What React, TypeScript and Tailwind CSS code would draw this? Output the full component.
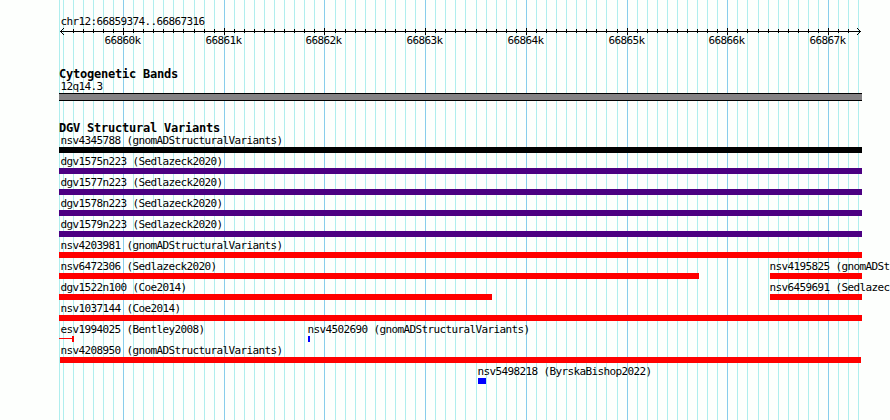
import { clsx } from "clsx";

interface Feature {
  name: string;
  from: number;
  to: number;
  color: string;
  thin?: boolean;
}

const VIEW_START = 66859374;
const VIEW_END = 66867316;
const PAD_LEFT = 60;
const SCALE = 800 / (VIEW_END - VIEW_START + 1);

const toX = (position: number): number =>
  Math.round(PAD_LEFT + (position - VIEW_START) * SCALE);

const ticks = Array.from({ length: 80 }, (_, index) => {
  const position = 66859400 + index * 100;
  return { position, x: toX(position), isMajor: position % 1000 === 0 };
});

const rows: Feature[][] = [
  [{ name: "nsv4345788 (gnomADStructuralVariants)", from: 59, to: 862, color: "bg-black" }],
  [{ name: "dgv1575n223 (Sedlazeck2020)", from: 59, to: 862, color: "bg-[#4b0082]" }],
  [{ name: "dgv1577n223 (Sedlazeck2020)", from: 59, to: 862, color: "bg-[#4b0082]" }],
  [{ name: "dgv1578n223 (Sedlazeck2020)", from: 59, to: 862, color: "bg-[#4b0082]" }],
  [{ name: "dgv1579n223 (Sedlazeck2020)", from: 59, to: 862, color: "bg-[#4b0082]" }],
  [{ name: "nsv4203981 (gnomADStructuralVariants)", from: 59, to: 862, color: "bg-[#ff0000]" }],
  [
    { name: "nsv6472306 (Sedlazeck2020)", from: 59, to: 699, color: "bg-[#ff0000]" },
    { name: "nsv4195825 (gnomADStructuralVariants)", from: 770, to: 862, color: "bg-[#ff0000]" },
  ],
  [
    { name: "dgv1522n100 (Coe2014)", from: 59, to: 492, color: "bg-[#ff0000]" },
    { name: "nsv6459691 (Sedlazeck2020)", from: 770, to: 862, color: "bg-[#ff0000]" },
  ],
  [{ name: "nsv1037144 (Coe2014)", from: 59, to: 862, color: "bg-[#ff0000]" }],
  [
    { name: "esv1994025 (Bentley2008)", from: 59, to: 74, color: "bg-[#ff0000]", thin: true },
    { name: "nsv4502690 (gnomADStructuralVariants)", from: 308, to: 310, color: "bg-[#0000ff]" },
  ],
  [{ name: "nsv4208950 (gnomADStructuralVariants)", from: 60, to: 861, color: "bg-[#ff0000]" }],
  [{ name: "nsv5498218 (ByrskaBishop2022)", from: 478, to: 486, color: "bg-[#0000ff]" }],
];

const GridLines = () => (
  <svg
    className="absolute inset-0"
    width="890"
    height="420"
    shapeRendering="crispEdges"
  >
    <rect x="59" y="0" width="1" height="420" fill="#afeeee" />
    {ticks.map(({ position, x, isMajor }) => (
      <rect
        key={position}
        x={x}
        y="0"
        width="1"
        height="420"
        fill={isMajor ? "#87ceeb" : "#afeeee"}
      />
    ))}
  </svg>
);

const Ruler = () => (
  <div className="relative -mt-px h-[39px]">
    <svg
      className="block"
      width="890"
      height="8"
      viewBox="0 27 890 8"
      shapeRendering="crispEdges"
    >
      <rect x="60" y="31" width="801" height="1" />
      {ticks.slice(1, -1).map(({ position, x, isMajor }) => (
        <rect
          key={position}
          x={x}
          y={isMajor ? 28 : 29}
          width="1"
          height={isMajor ? 7 : 4}
        />
      ))}
      <path d="M61 30h1v1h-1zM62 29h1v1h-1zM63 28h1v1h-1zM61 32h1v1h-1zM62 33h1v1h-1zM63 34h1v1h-1z" />
      <path d="M859 30h1v1h-1zM858 29h1v1h-1zM857 28h1v1h-1zM859 32h1v1h-1zM858 33h1v1h-1zM857 34h1v1h-1z" />
    </svg>
    {ticks
      .filter((tick) => tick.isMajor)
      .map(({ position, x }) => (
        <span
          key={position}
          className="absolute top-[8px]"
          style={{ left: x - 18.5 }}
        >
          {position / 1000}k
        </span>
      ))}
  </div>
);

const TrackTitle = ({ children }: { children: string }) => (
  <h2 className="pl-[59px] text-[12px] leading-[14px] font-bold tracking-[-0.225px]">
    {children}
  </h2>
);

const FeatureItem = ({
  feature,
  offset,
}: {
  feature: Feature;
  offset: number;
}) => (
  <div
    className="shrink-0"
    style={{ marginLeft: offset, width: feature.to - feature.from }}
  >
    <p
      className={clsx(
        feature.from === 59 && "ml-[1.4px]",
        feature.from === 60 && "ml-[0.4px]",
        feature.from > 60 && "-ml-[0.6px]",
      )}
    >
      {feature.name}
    </p>
    {feature.thin ? (
      <div className="flex h-1.5 items-center justify-end">
        <div className={clsx("mb-px h-px grow", feature.color)} />
        <div className={clsx("h-1.5 w-0.5", feature.color)} />
      </div>
    ) : (
      <div className={clsx("h-1.5", feature.color)} />
    )}
  </div>
);

const App = () => {
  return (
    <main className="relative h-[420px] w-[890px] overflow-hidden bg-[#fdfffd] font-['DejaVu_Sans_Mono',monospace] text-[11px] leading-[12px] tracking-[-0.622px] whitespace-nowrap text-black">
      <GridLines />
      <div className="relative pt-4">
        <p className="h-[12px] pl-[60.4px]">chr12:66859374..66867316</p>
        <Ruler />

        <section className="pt-px">
          <TrackTitle>Cytogenetic Bands</TrackTitle>
          <p className="pl-[60.4px]">12q14.3</p>
          <div className="ml-[59px] h-[8px] w-[803px] border-y border-black bg-[#848284]" />
        </section>

        <section className="pt-5">
          <TrackTitle>DGV Structural Variants</TrackTitle>
          {rows.map((row) => (
            <div key={row[0].name} className="flex h-[21px]">
              {row.map((feature, index) => (
                <FeatureItem
                  key={feature.name}
                  feature={feature}
                  offset={feature.from - (index > 0 ? row[index - 1].to : 0)}
                />
              ))}
            </div>
          ))}
        </section>
      </div>
    </main>
  );
};

export default App;
